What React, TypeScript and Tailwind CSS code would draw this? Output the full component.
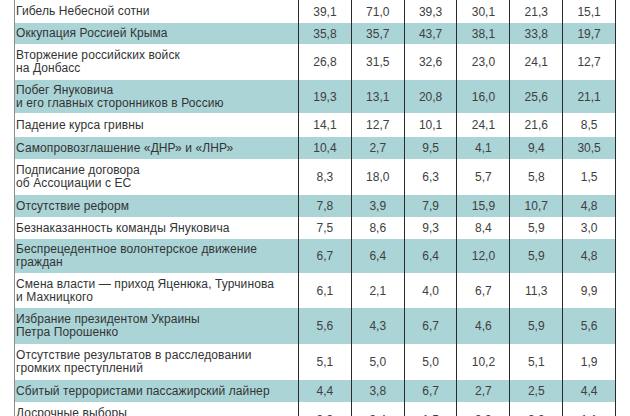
import React from 'react';

type Row = {
  label: string[];
  values: string[];
  h: string;
};

const rows: Row[] = [
  { label: ['Гибель Небесной сотни'], values: ['39,1', '71,0', '39,3', '30,1', '21,3', '15,1'], h: 'h-[23px]' },
  { label: ['Оккупация Россией Крыма'], values: ['35,8', '35,7', '43,7', '38,1', '33,8', '19,7'], h: 'h-[21px]' },
  { label: ['Вторжение российских войск', 'на Донбасс'], values: ['26,8', '31,5', '32,6', '23,0', '24,1', '12,7'], h: 'h-[36px]' },
  { label: ['Побег Януковича', 'и его главных сторонников в Россию'], values: ['19,3', '13,1', '20,8', '16,0', '25,6', '21,1'], h: 'h-[33px]' },
  { label: ['Падение курса гривны'], values: ['14,1', '12,7', '10,1', '24,1', '21,6', '8,5'], h: 'h-[24px]' },
  { label: ['Самопровозглашение «ДНР» и «ЛНР»'], values: ['10,4', '2,7', '9,5', '4,1', '9,4', '30,5'], h: 'h-[22px]' },
  { label: ['Подписание договора', 'об Ассоциации с ЕС'], values: ['8,3', '18,0', '6,3', '5,7', '5,8', '1,5'], h: 'h-[36px]' },
  { label: ['Отсутствие реформ'], values: ['7,8', '3,9', '7,9', '15,9', '10,7', '4,8'], h: 'h-[22px]' },
  { label: ['Безнаказанность команды Януковича'], values: ['7,5', '8,6', '9,3', '8,4', '5,9', '3,0'], h: 'h-[22px]' },
  { label: ['Беспрецедентное волонтерское движение', 'граждан'], values: ['6,7', '6,4', '6,4', '12,0', '5,9', '4,8'], h: 'h-[34px]' },
  { label: ['Смена власти — приход Яценюка, Турчинова', 'и Махницкого'], values: ['6,1', '2,1', '4,0', '6,7', '11,3', '9,9'], h: 'h-[35px]' },
  { label: ['Избрание президентом Украины', 'Петра Порошенко'], values: ['5,6', '4,3', '6,7', '4,6', '5,9', '5,6'], h: 'h-[36px]' },
  { label: ['Отсутствие результатов в расследовании', 'громких преступлений'], values: ['5,1', '5,0', '5,0', '10,2', '5,1', '1,9'], h: 'h-[36px]' },
  { label: ['Сбитый террористами пассажирский лайнер'], values: ['4,4', '3,8', '6,7', '2,7', '2,5', '4,4'], h: 'h-[22px]' },
  { label: ['Досрочные выборы', 'в Верховную Раду'], values: ['3,3', '3,4', '1,5', '3,3', '3,9', '1,1'], h: 'h-[36px]' },
];

export default function App() {
  return (
    <div
      className="w-[630px] h-[416px] overflow-hidden bg-white text-[12px] text-[#333]"
      style={{ fontFamily: '"Liberation Sans", Arial, sans-serif' }}
    >
      <div className="ml-[14px] w-[602px] border-l border-[#8c8c8c]">
        {rows.map((row, i) => (
          <div
            key={i}
            className={`grid grid-cols-[284px_repeat(6,1fr)] ${row.h} ${i % 2 === 1 ? 'bg-[#abd4d7]' : 'bg-white'}`}
          >
            {/* Label */}
            <div className="flex flex-col justify-center pl-[1px] leading-[13px] tracking-[0.1px] border-r border-[#2a2a2a]">
              {row.label.map((line, j) => (
                <span key={j} className="whitespace-nowrap">{line}</span>
              ))}
            </div>
            {row.values.map((v, k) => (
              <div key={k} className="flex items-center justify-center text-[#404040] border-r border-[#2a2a2a]">
                {v}
              </div>
            ))}
          </div>
        ))}
      </div>
    </div>
  );
}
